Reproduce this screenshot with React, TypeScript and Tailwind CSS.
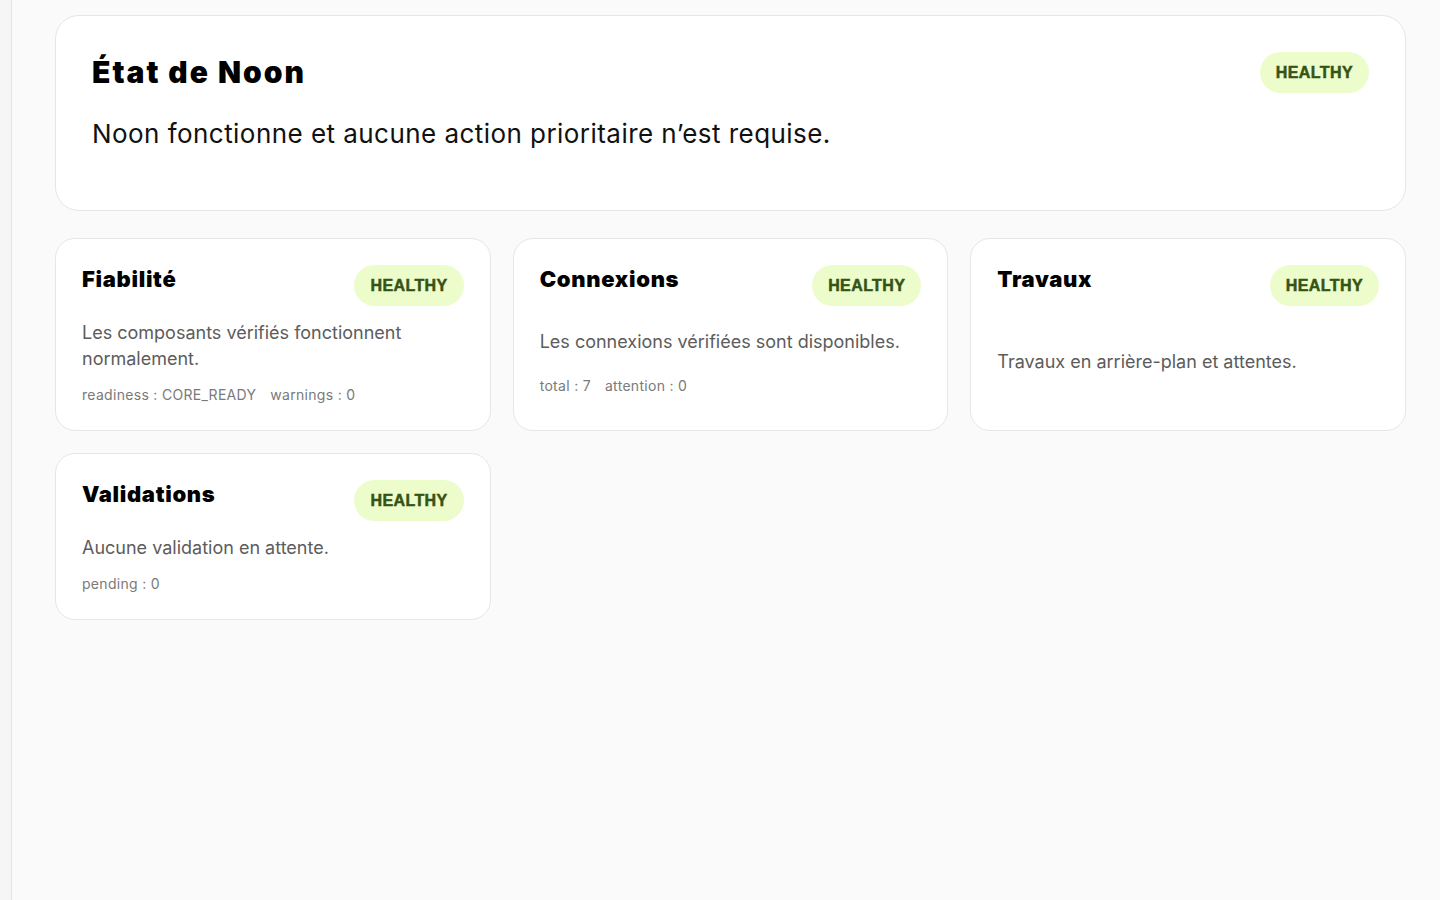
const sans = "font-['Inter','Noto_Sans',sans-serif]";

type Item = {
  title: string;
  text: string;
  meta?: string[];
};

const items: Item[] = [
  {
    title: "Fiabilité",
    text: "Les composants vérifiés fonctionnent normalement.",
    meta: ["readiness : CORE_READY", "warnings : 0"],
  },
  {
    title: "Connexions",
    text: "Les connexions vérifiées sont disponibles.",
    meta: ["total : 7", "attention : 0"],
  },
  {
    title: "Travaux",
    text: "Travaux en arrière-plan et attentes.",
  },
  {
    title: "Validations",
    text: "Aucune validation en attente.",
    meta: ["pending : 0"],
  },
];

const Badge = () => (
  <span className="inline-flex h-[41px] shrink-0 items-center rounded-full bg-[#ecfccb] px-4 font-['Liberation_Sans',Arial,sans-serif] text-[16px] font-bold tracking-[0.4px] text-[#365314] [-webkit-text-stroke:0.5px_#365314]">
    HEALTHY
  </span>
);

const StatusCard = ({ item }: { item: Item }) => (
  <div className="grid gap-[14px] rounded-[20px] border border-[#e6e6e6] bg-white p-[26px]">
    <div className="flex items-start justify-between gap-4">
      <h2 className="text-[22px] font-black leading-[28px] tracking-[0.7px] text-black">{item.title}</h2>
      <Badge />
    </div>
    <p className="text-[18px] leading-[26px] text-[#5c5c5c]">{item.text}</p>
    {item.meta && (
      <div className="flex gap-[14px] text-[14px] leading-[18px] tracking-[0.3px] text-[#7a7a7a]">
        {item.meta.map((m) => (
          <span key={m}>{m}</span>
        ))}
      </div>
    )}
  </div>
);

export default function App() {
  return (
    <div className={`flex min-h-screen bg-[#fafafa] ${sans}`}>
      <aside className="w-[12px] shrink-0 border-r border-[#e3e3e3] bg-[#f6f6f6]" />
      <main className="flex-1 pl-[43px] pr-[34px] pt-[15px]">
        <section className="h-[196px] rounded-[24px] border border-[#e6e6e6] bg-white px-[36px] pt-[36px]">
          <div className="flex items-start justify-between">
            <h1 className="text-[30px] font-black leading-[40px] tracking-[2px] text-black">État de Noon</h1>
            <Badge />
          </div>
          <p className="mt-[25px] text-[26px] leading-[32px] tracking-[0.45px] text-[#111]">
            Noon fonctionne et aucune action prioritaire n’est requise.
          </p>
        </section>
        <div className="mt-[27px] grid grid-cols-3 gap-[22px]">
          {items.map((item) => (
            <StatusCard key={item.title} item={item} />
          ))}
        </div>
      </main>
    </div>
  );
}
